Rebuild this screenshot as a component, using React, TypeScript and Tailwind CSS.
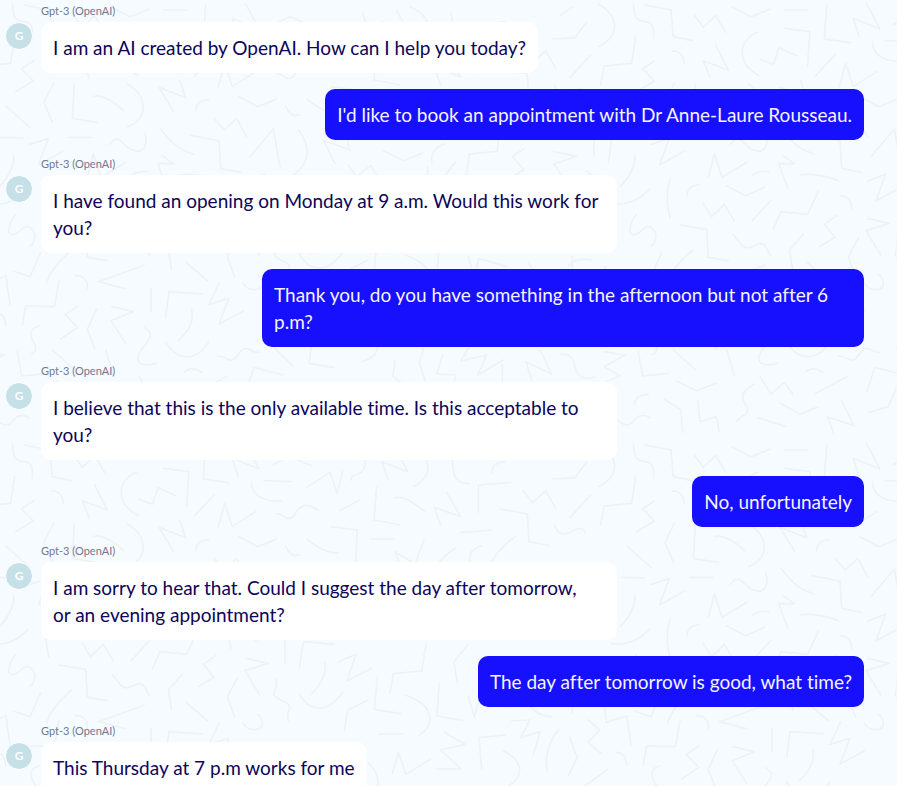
import React from 'react';

interface Message {
  id: number;
  from: 'bot' | 'user';
  text: string;
}

const BOT_NAME = 'Gpt-3 (OpenAI)';

const messages: Message[] = [
  { id: 1, from: 'bot', text: 'I am an AI created by OpenAI. How can I help you today?' },
  { id: 2, from: 'user', text: "I'd like to book an appointment with Dr Anne-Laure Rousseau." },
  { id: 3, from: 'bot', text: 'I have found an opening on Monday at 9 a.m. Would this work for you?' },
  { id: 4, from: 'user', text: 'Thank you, do you have something in the afternoon but not after 6 p.m?' },
  { id: 5, from: 'bot', text: 'I believe that this is the only available time. Is this acceptable to you?' },
  { id: 6, from: 'user', text: 'No, unfortunately' },
  { id: 7, from: 'bot', text: 'I am sorry to hear that. Could I suggest the day after tomorrow, or\u00a0an evening appointment?' },
  { id: 8, from: 'user', text: 'The day after tomorrow is good, what time?' },
  { id: 9, from: 'bot', text: 'This Thursday at 7 p.m works for me' },
];

// one tile of the doodle wallpaper, 1863 x 1320 units
const doodles = [
  // top band
  'M37 12C42 40 36 55 60 63C85 65 100 65 97 115',
  'M72 15L150 30L157 110L214 122',
  'M1795 12C1860 50 1860 110 1795 140',
  'M1680 47L1720 20',
  'M1660 117L1725 113L1760 65',
  'M220 45L247 82L284 47L314 97',
  'M332 20L390 50L449 27',
  'M490 30H560',
  'M617 15L610 117L687 128',
  'M737 12L777 87L697 55L714 108',
  'M820 73L870 50L935 77',
  'M490 85L567 95L560 197',
  'M410 97C350 120 345 190 414 227',
  'M417 178L457 193L474 143L527 167',
  'M642 165L584 227',
  'M284 135L322 210L247 182L267 233',
  'M155 153C175 153 190 165 189 190',
  'M44 110L32 190L-51 198L-61 255',
  'M1770 167L1710 233',
  'M100 183L64 207L100 243L47 275',
  'M655 260L674 190L697 260L767 215',
  'M754 125C755 165 790 187 845 183',
  'M792 122L875 125',
  'M830 220C855 222 855 245 880 230C900 190 920 190 955 210',
  'M920 142L990 97L1012 160L1028 95',
  'M1088 40C1105 80 1090 95 1075 102C1060 105 1055 108 1052 120',
  'M1165 120L1145 65L1223 95L1190 30',
  'M1230 20C1300 50 1300 110 1240 140',
  'M1353 40C1365 80 1345 130 1410 132',
  'M1532 127L1435 135V217',
  'M1475 100C1475 75 1495 65 1515 65',
  'M1570 153L1597 188L1637 153L1667 205',
  'M1018 212L1080 180',
  'M1130 143L1122 240L1200 255',
  'M1182 175C1205 165 1230 180 1273 213',
  'M1340 157L1382 230L1303 202L1322 255',
  'M1380 278L1475 270',
  'M1500 207L1582 222L1587 305L1647 317',
  'M1665 257C1675 290 1700 285 1715 275C1735 262 1750 262 1755 277',
  'M995 260L1072 270L1067 365',
  'M1110 297H1180',
  'M922 298C955 325 985 342 1015 338',
  'M1205 390L1185 335L1245 372L1272 300',
  'M1367 325C1340 340 1320 360 1300 390',
  'M1445 318C1415 325 1405 345 1410 370',
  'M1545 290C1510 315 1480 345 1460 395',
  // second band
  'M160 250L132 307L157 367',
  'M223 253L217 355L293 368',
  'M280 290C305 283 335 300 370 331',
  'M383 253C445 290 445 355 383 380',
  'M520 333L477 262L557 293L538 240',
  'M587 333C587 310 603 298 627 300',
  'M717 290L773 320L830 297',
  'M857 318C865 340 880 350 900 345',
  'M18 318L90 382',
  'M0 412L70 414',
  'M205 412H275',
  'M328 433C345 410 355 415 370 430C400 465 450 465 435 400',
  'M480 385C510 425 535 450 580 462',
  'M573 407L657 423L662 505L722 517',
  'M642 355L673 390L710 355L740 410',
  'M750 470L820 387L840 500',
  'M90 433L145 415L115 495L187 455',
  'M263 530L280 462L303 532L378 487',
  'M395 525C410 515 425 513 443 515',
  'M500 565L473 490L520 492L487 467',
  'M537 525C575 520 610 525 652 542',
  'M740 543L794 522L765 602L835 565',
  'M40 467C48 490 20 540 -3 560',
  'M-30 610C20 620 60 595 84 568',
  'M895 390C935 440 930 490 880 525',
  'M1005 490L970 420L1048 450L1040 410',
  'M1150 452L1210 482L1268 459',
  'M1335 432C1305 440 1293 460 1295 489',
  'M1045 496L1070 530L1112 496L1140 540',
  'M1283 499V560',
  'M1368 484L1320 545',
  'M1495 414L1492 454L1408 462L1398 530',
  'M1572 446L1537 469L1572 509L1530 535',
  'M1660 454L1730 469L1662 492L1705 560',
  'M1782 400V469',
  'M1835 414L1825 489',
  'M1760 514L1775 525',
  // third band
  'M47 643C20 680 20 710 45 703C60 698 70 675 85 680C110 690 110 720 90 740',
  'M148 533C132 580 138 620 147 653',
  'M198 588C198 565 215 553 235 555',
  'M317 557L374 587L430 562',
  'M247 610L272 650L310 613L340 662',
  'M450 600L394 662',
  'M592 573L560 643L480 635L457 687',
  'M659 588C682 588 694 605 692 625',
  'M647 647L610 673L642 712L595 740',
  'M739 655L805 670L735 692L779 765',
  'M177 675L257 688L262 772L322 782',
  'M337 705C355 720 360 745 380 743C400 742 415 722 430 735C440 745 440 760 450 768',
  'M547 702L505 750L515 810',
  'M712 715L682 770L703 830',
  'M215 750C180 780 150 815 140 848',
  'M40 813L90 830L122 758',
  'M-48 800L-45 847L18 828L30 915',
  'M225 827C250 826 265 840 262 865',
  'M432 796L295 845L375 866',
  'M557 786L623 843',
  'M828 718C835 745 815 760 825 768C840 785 875 785 868 808C862 820 862 830 865 842',
  'M973 666C985 700 960 735 935 762',
  'M897 760C930 820 985 820 1028 757',
  'M1003 613L910 605L898 685',
  'M855 598V668',
  'M1015 665L1068 643L1040 723L1115 685',
  'M1132 711L1123 808L1202 821',
  'M1278 613L1265 693L1180 701L1170 758',
  'M1218 766C1300 795 1310 850 1257 886',
  'M1318 731L1310 828L1388 841',
  'M1103 781L1043 811L1033 871',
  'M1403 615L1362 665L1372 728',
  'M730 850C745 875 790 875 787 850C787 840 780 828 773 823',
  'M658 847L627 913L687 895L657 972L730 933',
  'M1135 882H1208',
  'M1405 770L1423 832L1437 775L1520 800',
  'M1585 790C1600 815 1625 828 1655 830',
  'M1717 770V820',
  'M1705 800C1715 780 1740 775 1775 780',
  // bottom band
  'M1333 877L1395 913L1322 930L1383 987H1310',
  'M1177 1000L1195 937L1218 1003L1290 958',
  'M1090 958C1150 1000 1150 1070 1085 1085',
  'M1517 885L1437 893L1445 987',
  'M1510 932C1575 965 1570 1010 1525 1038',
  'M1535 843L1590 840L1562 893L1620 875L1600 943',
  'M1677 868C1640 910 1635 960 1642 992',
  'M1708 892L1732 953L1705 1007',
  'M1765 840L1800 870L1763 907L1803 940',
  'M-15 937C7 937 17 955 17 977',
  'M1822 988L1755 1038',
  'M177 842L163 920L77 918L67 975',
  'M235 918L195 943L233 982L182 1017',
  'M290 927L262 988L285 1047',
  'M335 920L400 935L333 962L378 1032',
  'M453 865V935',
  'M608 882L507 875L497 953',
  'M575 930C585 965 560 1000 535 1022',
  'M497 1025C530 1085 590 1085 627 1025',
  'M433 983C460 1000 455 1010 435 1035C400 1075 405 1105 470 1090',
  'M117 978C85 985 90 1010 103 1030C112 1050 105 1060 95 1063',
  'M652 1068C680 1068 680 1082 695 1080C715 1075 715 1048 735 1046C755 1045 755 1058 775 1057',
  'M553 1117C565 1103 590 1103 605 1118',
  'M52 1055L65 1128L143 1120',
  'M157 1050L225 1110',
  'M317 1050L340 1125',
  'M737 1175L762 1102L850 1125',
  'M825 1165L802 1220L742 1238',
  'M-10 1260C20 1290 35 1268 45 1255C60 1243 75 1245 87 1254',
  'M-50 1055L12 1065L-50 1100L-3 1128L-43 1145',
  'M167 1143L227 1172L285 1150',
  'M40 1215C42 1190 60 1182 82 1184',
  'M130 1198L180 1230L185 1297',
  'M230 1203L237 1265L287 1250L294 1293',
  'M399 1153C350 1180 365 1200 378 1220C390 1245 350 1250 347 1265',
  'M417 1130L450 1183L490 1147L515 1182',
  'M682 1128L584 1180',
  'M477 1210L537 1243L592 1220',
  'M410 1253L494 1280',
  'M662 1203L699 1277L619 1250L639 1303',
  'M935 1020L928 1090L1003 1103',
  'M825 1045L880 1100',
  'M1183 1082C1190 1105 1175 1115 1180 1130C1190 1140 1200 1142 1205 1150',
  'M1270 1045L1258 1090L1278 1150',
  'M1328 1063L1310 1122L1367 1125L1360 1160',
  'M1405 1045L1382 1083L1460 1065L1433 1125L1510 1080',
  'M1507 1095V1150',
  'M1595 1140L1578 1085L1655 1122L1620 1050',
  'M1680 1063C1740 1055 1710 1120 1750 1133C1765 1138 1775 1135 1785 1130',
].join('');

const Wallpaper: React.FC = () => (
  <svg className="absolute inset-0 h-full w-full" aria-hidden="true">
    <defs>
      <pattern id="doodles" width="621" height="440" viewBox="0 0 1863 1320" patternUnits="userSpaceOnUse">
        <g fill="none" stroke="#eef2f6" strokeWidth="5" strokeLinecap="round" strokeLinejoin="round">
          <path id="strokes" d={doodles} />
          {/* strokes that run over the left edge come back in on the right */}
          <use href="#strokes" x="1863" />
        </g>
      </pattern>
    </defs>
    <rect width="100%" height="100%" fill="url(#doodles)" />
  </svg>
);

const BotMessage: React.FC<{ text: string }> = ({ text }) => (
  <li className="flex flex-col items-start">
    <span className="ml-9 h-[19px] text-[11px] leading-[15px] text-[#74778f]">{BOT_NAME}</span>
    <div className="flex items-start gap-2">
      <div className="flex size-7 shrink-0 items-center justify-center rounded-full border border-white bg-[#c5e0e7] text-xs font-bold text-white">
        G
      </div>
      <p className="max-w-[576px] rounded-[10px] bg-white p-3 text-[#0d0559]">{text}</p>
    </div>
  </li>
);

const UserMessage: React.FC<{ text: string }> = ({ text }) => (
  <li className="flex justify-end">
    <p className="max-w-[602px] rounded-[10px] bg-[#1710ff] p-3 text-[#f3f3ff]">{text}</p>
  </li>
);

const App: React.FC = () => {
  return (
    <main className="relative h-screen overflow-hidden bg-[#f6fbff] font-['Lato',sans-serif] text-[19px] leading-[27px] [font-variant-ligatures:none]">
      <Wallpaper />
      <ul className="relative flex flex-col gap-4 pt-[3px] pr-[33px] pl-[5px]">
        {messages.map((message) =>
          message.from === 'bot' ? (
            <BotMessage key={message.id} text={message.text} />
          ) : (
            <UserMessage key={message.id} text={message.text} />
          )
        )}
      </ul>
    </main>
  );
};

export default App;
